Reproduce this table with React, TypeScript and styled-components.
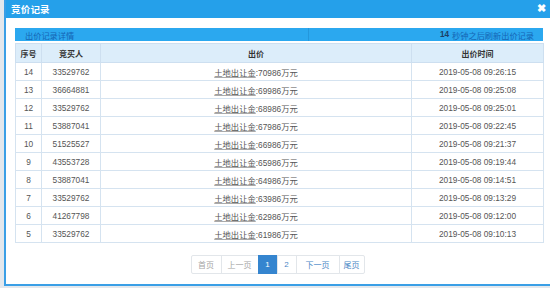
import React from "react";
import styled, { createGlobalStyle } from "styled-components";

const GlobalStyle = createGlobalStyle`
  html, body {
    margin: 0;
    padding: 0;
    background: #e3e8ed;
    font-family: "Liberation Sans", "Noto Sans CJK SC", sans-serif;
  }
`;

const Page = styled.div`
  width: 550px;
  height: 288px;
  overflow: hidden;
  padding-left: 4px;
  box-sizing: border-box;
`;

const Dialog = styled.div`
  width: 546px;
  height: 286px;
  box-sizing: border-box;
  background: #fff;
  border-left: 2px solid #3a9fe6;
  border-bottom: 2px solid #3a9fe6;
  display: flex;
  flex-direction: column;
`;

const TitleBar = styled.div`
  height: 18px;
  background: #25a0ea;
  display: flex;
  align-items: center;
  justify-content: space-between;
  padding: 0 4px 0 5px;
`;

const Title = styled.span`
  color: #fff;
  font-size: 9.5px;
  font-weight: bold;
  letter-spacing: 0.2px;
`;

const Close = styled.span`
  color: #fff;
  font-size: 11px;
  font-weight: bold;
  line-height: 1;
  margin-top: -2px;
`;

const Body = styled.div`
  padding: 10px 7px 0 9px;
  display: flex;
  flex-direction: column;
`;

const InfoBar = styled.div`
  height: 13px;
  background: #2ba8ef;
  display: grid;
  grid-template-columns: 293px 1fr;
  font-size: 8.2px;
  color: #1565b5;
`;

const InfoCell = styled.div<{ $right?: boolean }>`
  display: flex;
  align-items: center;
  justify-content: ${({ $right }) => ($right ? "flex-end" : "flex-start")};
  padding: ${({ $right }) => ($right ? "0 9px 0 0" : "0 0 0 10px")};
  border-left: ${({ $right }) => ($right ? "1px solid #2497dc" : "none")};
`;

const Count = styled.b`
  color: #1c3f66;
  margin-right: 3px;
`;

const Table = styled.table`
  margin-top: 2px;
  width: 528px;
  border-collapse: collapse;
  table-layout: fixed;
  font-size: 8.3px;
  color: #555;
`;

const HeadCell = styled.th`
  height: 18px;
  padding: 0;
  background: #dcedfa;
  border: 1px solid #cddff0;
  color: #333;
  font-weight: bold;
  font-size: 8px;
  text-align: center;
`;

const Cell = styled.td`
  height: 17px;
  padding: 0;
  border: 1px solid #d5e3f0;
  text-align: center;
  white-space: nowrap;
`;

const Price = styled.span`
  text-decoration: underline;
  text-decoration-color: #aaa;
`;

const Pager = styled.div`
  margin-top: 12px;
  display: flex;
  justify-content: center;
  padding-right: 2px;
`;

const PageButton = styled.span<{ $w: number; $active?: boolean; $disabled?: boolean }>`
  width: ${({ $w }) => $w}px;
  height: 19px;
  box-sizing: border-box;
  display: flex;
  align-items: center;
  justify-content: center;
  font-size: 8px;
  border: 1px solid ${({ $active }) => ($active ? "#3585cf" : "#e2e6ea")};
  margin-left: -1px;
  background: ${({ $active }) => ($active ? "#3585cf" : "#fff")};
  color: ${({ $active, $disabled }) => ($active ? "#fff" : $disabled ? "#a5a5a5" : "#4a87c6")};
  &:first-child {
    border-radius: 2px 0 0 2px;
  }
  &:last-child {
    border-radius: 0 2px 2px 0;
  }
`;

const rows = [
  [14, "33529762", "70986", "09:26:15"],
  [13, "36664881", "69986", "09:25:08"],
  [12, "33529762", "68986", "09:25:01"],
  [11, "53887041", "67986", "09:22:45"],
  [10, "51525527", "66986", "09:21:37"],
  [9, "43553728", "65986", "09:19:44"],
  [8, "53887041", "64986", "09:14:51"],
  [7, "33529762", "63986", "09:13:29"],
  [6, "41267798", "62986", "09:12:00"],
  [5, "33529762", "61986", "09:10:13"],
];

const pages = [
  { label: "首页", w: 31, disabled: true },
  { label: "上一页", w: 38, disabled: true },
  { label: "1", w: 20, active: true },
  { label: "2", w: 20 },
  { label: "下一页", w: 44 },
  { label: "尾页", w: 26 },
];

export default function App() {
  return (
    <Page>
      <GlobalStyle />
      <Dialog>
        <TitleBar>
          <Title>竞价记录</Title>
          <Close>✖</Close>
        </TitleBar>
        <Body>
          <InfoBar>
            <InfoCell>出价记录详情</InfoCell>
            <InfoCell $right>
              <Count>14</Count>秒钟之后刷新出价记录
            </InfoCell>
          </InfoBar>
          <Table>
            <colgroup>
              <col style={{ width: 26 }} />
              <col style={{ width: 59 }} />
              <col style={{ width: 311 }} />
              <col style={{ width: 132 }} />
            </colgroup>
            <thead>
              <tr>
                <HeadCell>序号</HeadCell>
                <HeadCell>竞买人</HeadCell>
                <HeadCell>出价</HeadCell>
                <HeadCell>出价时间</HeadCell>
              </tr>
            </thead>
            <tbody>
              {rows.map(([no, buyer, price, time]) => (
                <tr key={no}>
                  <Cell>{no}</Cell>
                  <Cell>{buyer}</Cell>
                  <Cell>
                    <Price>土地出让金</Price>:{price}万元
                  </Cell>
                  <Cell>2019-05-08 {time}</Cell>
                </tr>
              ))}
            </tbody>
          </Table>
          <Pager>
            {pages.map((p) => (
              <PageButton key={p.label} $w={p.w} $active={p.active} $disabled={p.disabled}>
                {p.label}
              </PageButton>
            ))}
          </Pager>
        </Body>
      </Dialog>
    </Page>
  );
}
